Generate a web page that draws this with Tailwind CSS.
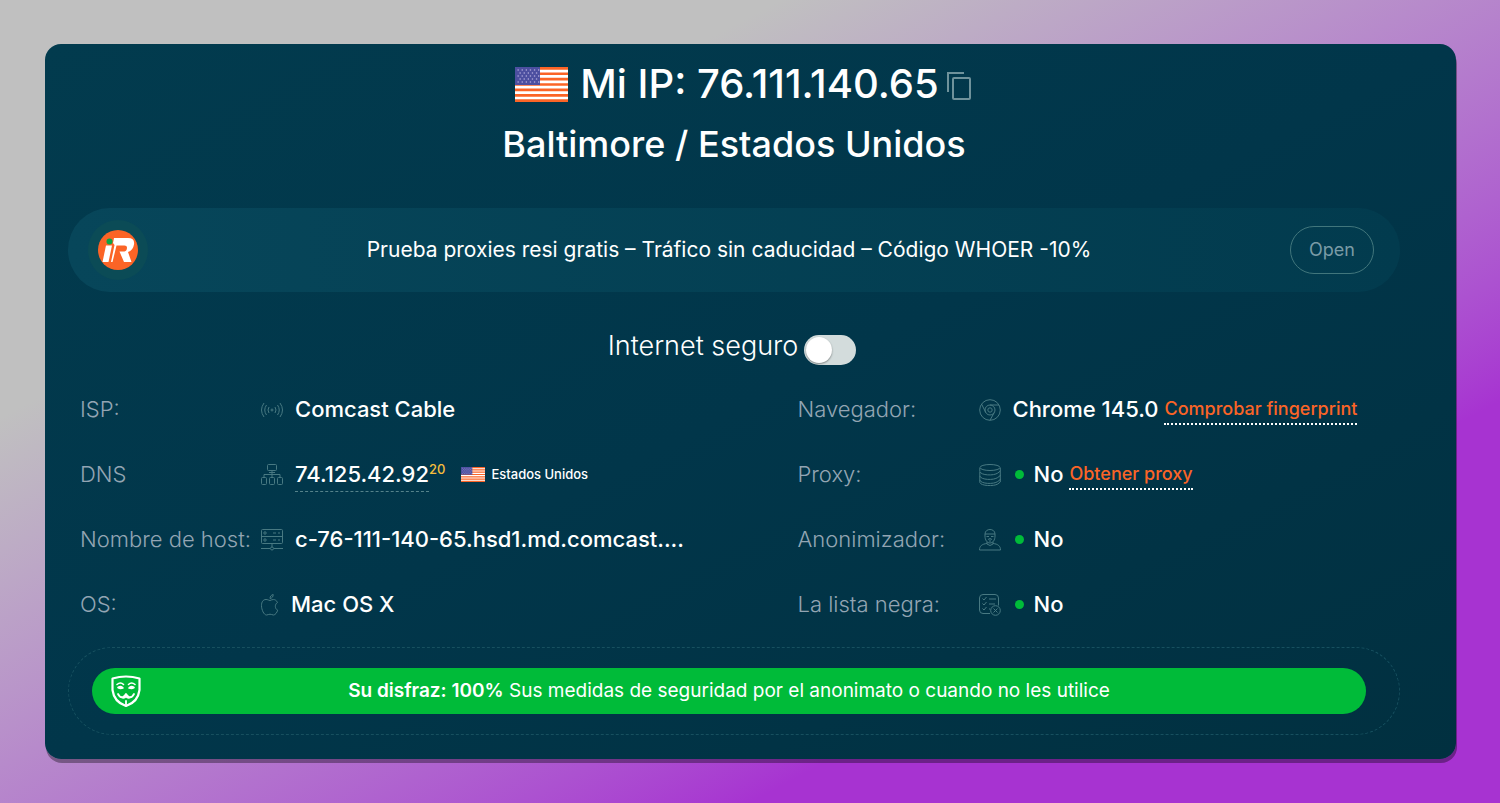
<!DOCTYPE html>
<html lang="es">
<head>
  <meta charset="UTF-8" />
  <meta name="viewport" content="width=device-width, initial-scale=1.0" />
  <title>Mi IP: 76.111.140.65</title>
  <script src="https://cdn.jsdelivr.net/npm/@tailwindcss/browser@4"></script>
</head>
<body class="min-h-screen bg-linear-to-br from-[#c0c0c0] from-26% to-[#a733d1] to-75% py-11 pr-11 pl-[45px] font-[Inter,sans-serif] text-white">
  <!-- Flag shared by the heading and the DNS row -->
  <svg class="hidden" aria-hidden="true">
    <symbol id="flag" viewBox="0 0 53 35" preserveAspectRatio="none">
      <clipPath id="flag-clip"><rect width="53" height="35" rx="3" /></clipPath>
      <g clip-path="url(#flag-clip)">
        <rect width="53" height="35" fill="#fff" />
        <path d="M0 1.35h53M0 6.75h53M0 12.1h53M0 17.5h53M0 22.9h53M0 28.3h53M0 33.65h53" stroke="#fb6426" stroke-width="2.7" />
        <rect width="25" height="18" fill="#4c4fa0" />
        <path d="M2.500 3h22M4.500 6h20M2.500 9h22M4.500 12h20M2.500 15h22" stroke="#cfc6ee" stroke-width="1.200" stroke-dasharray="1.300 2.800" />
      </g>
    </symbol>
  </svg>

  <main class="rounded-2xl bg-linear-to-br from-[#023b4e] via-[#01364a] to-[#013040] pt-3 pr-14 pb-6 pl-[23px] shadow-[1px_4px_0_rgba(0,0,0,0.35)]">
    <header class="text-center">
      <h1 class="flex h-14 items-center justify-center pl-[18px] text-[40px] font-medium">
        <svg class="mr-3 h-[35px] w-[53px]" role="img" aria-label="Estados Unidos"><use href="#flag" /></svg>
        <span>Mi IP: 76.111.140.65</span>
        <button type="button" aria-label="Copiar" class="mt-1 ml-2 text-[#6f929b]">
          <svg class="h-7 w-6" viewBox="0 0 24 28" fill="none" stroke="currentColor" stroke-width="2">
            <path d="M1 20V1h16" />
            <rect x="6" y="6" width="17" height="21" rx="1" />
          </svg>
        </button>
      </h1>
      <h2 class="mt-2 text-4xl/12 font-medium">Baltimore / Estados Unidos</h2>
    </header>

    <section class="mt-10 flex h-21 items-center rounded-full bg-linear-to-r from-[#07465a] to-[#023b4e] pr-[26px] pl-5">
      <div class="flex size-15 items-center justify-center rounded-full bg-[#0b4b56]">
        <svg class="size-10" viewBox="0 0 40 40" role="img" aria-label="iR">
          <circle cx="20" cy="20" r="20" fill="#fb6426" />
          <path d="M8 15.500h6L10.500 32H4.500z" fill="#fff" />
          <path d="M16 8h14q7 0 6 6.500-1 6-6 7.500l3.500 10H26l-4.500-10.500h5q2.500-.5 2.500-4 0-2-2.500-2h-8L14.500 32H13l3.500-17-1.500-2z" fill="#fff" />
          <circle cx="11.500" cy="11.500" r="3" fill="#0ba545" />
        </svg>
      </div>
      <p class="flex-1 pl-5 text-center text-[21px]">Prueba proxies resi gratis – Tráfico sin caducidad – Código WHOER -10%</p>
      <button type="button" class="h-12 w-21 rounded-full border border-[#41767c] text-lg text-[#7a9ba6]">Open</button>
    </section>

    <div class="mt-9 flex h-10 items-center justify-center gap-1.5 pr-1">
      <label for="secure" class="pb-1 text-[27px] font-light">Internet seguro</label>
      <input type="checkbox" id="secure" role="switch"
             class="relative mt-1 h-[30px] w-13 appearance-none rounded-full bg-[#d3dcdc] before:absolute before:top-0.5 before:left-0.5 before:size-[26px] before:rounded-full before:bg-white before:shadow-[0_1px_2px_rgba(0,0,0,0.4)] checked:bg-[#00bb39] checked:before:left-6" />
    </div>

    <div class="mt-[9px] grid grid-cols-2 gap-x-[115px] pl-3 text-[22px] font-medium">
      <dl>
        <div class="flex h-[65px] items-center">
          <dt class="w-[181px] font-light text-[#93a5b3]">ISP:</dt>
          <dd class="flex items-center">
            <svg class="mr-3 size-[22px] text-[#487982]" viewBox="0 0 22 22" fill="none" stroke="currentColor">
              <circle cx="11" cy="11" r="1" />
              <path d="M8 8q-2 3 0 6M5.500 6q-3.500 5 0 10M3 4q-5 7 0 14M14 8q2 3 0 6M16.500 6q3.500 5 0 10M19 4q5 7 0 14" />
            </svg>
            Comcast Cable
          </dd>
        </div>
        <div class="flex h-[65px] items-center">
          <dt class="w-[181px] font-light text-[#93a5b3]">DNS</dt>
          <dd class="flex items-center">
            <svg class="mr-3 size-[22px] text-[#487982]" viewBox="0 0 22 22" fill="none" stroke="currentColor">
              <rect x="6.500" y=".5" width="9" height="6" rx="1" />
              <path d="M8 8.500h6M11 6.500v4M3 13v-2.500h16V13M11 10.500V13" />
              <rect x=".5" y="13.500" width="5" height="7" rx="1" />
              <rect x="8.500" y="13.500" width="5" height="7" rx="1" />
              <rect x="16.500" y="13.500" width="5" height="7" rx="1" />
            </svg>
            <span class="border-b border-dashed border-[#56838b]">74.125.42.92</span>
            <sup class="-top-1.5 text-[13px] text-[#f5bd3c]">20</sup>
            <svg class="mr-1.5 ml-4 h-[15px] w-6" aria-hidden="true"><use href="#flag" /></svg>
            <span class="text-[13px]">Estados Unidos</span>
          </dd>
        </div>
        <div class="flex h-[65px] items-center">
          <dt class="w-[181px] shrink-0 font-light whitespace-nowrap text-[#93a5b3]">Nombre de host:</dt>
          <dd class="flex items-center whitespace-nowrap">
            <svg class="mr-3 size-[22px] shrink-0 text-[#487982]" viewBox="0 0 22 22" fill="none" stroke="currentColor">
              <rect x=".5" y=".5" width="21" height="14" rx="1" />
              <path d="M.5 7.500h21M12 4h3M17 4h2M12 11h3M17 11h2M11 14.500V18M0 19.500h9M13 19.500h9" />
              <circle cx="4" cy="4" r="1.200" /><circle cx="4" cy="11" r="1.200" /><circle cx="11" cy="19.500" r="1.500" />
            </svg>
            c-76-111-140-65.hsd1.md.comcast....
          </dd>
        </div>
        <div class="flex h-[65px] items-center">
          <dt class="w-[181px] font-light text-[#93a5b3]">OS:</dt>
          <dd class="flex items-center">
            <svg class="mr-3 h-[22px] w-[18px] text-[#487982]" viewBox="0 0 18 22" fill="none" stroke="currentColor">
              <path d="M9 6.500C7 6 6.500 5.500 5 5.500 2 5.500.5 8 .5 11.500.5 16 3 21 5.500 21c1.500 0 2-.8 3.500-.8s2 .8 3.500.8c1.800 0 3.500-2.500 4.200-4.800-3-1.400-3.200-6-.2-7.700C15.600 6.500 14 5.500 12.500 5.500c-1.500 0-2.200.6-3.500 1z" />
              <path d="M9 4.500C9 2.500 10.300.900 12.200.5c.1 2-1.200 3.800-3.200 4z" />
            </svg>
            Mac OS X
          </dd>
        </div>
      </dl>

      <dl>
        <div class="flex h-[65px] items-center">
          <dt class="w-[181px] font-light text-[#93a5b3]">Navegador:</dt>
          <dd class="flex items-center whitespace-nowrap">
            <svg class="mr-3 size-[22px] text-[#487982]" viewBox="0 0 22 22" fill="none" stroke="currentColor">
              <circle cx="11" cy="11" r="10.300" /><circle cx="11" cy="11" r="5" /><circle cx="11" cy="11" r="2.200" />
              <path d="M11 6h9M2.500 5l4.300 8.500M15.300 13.500L11 21.200" />
            </svg>
            Chrome 145.0
            <a href="#" class="ml-1.5 border-b-2 border-dotted border-white text-lg text-[#fb6426]">Comprobar fingerprint</a>
          </dd>
        </div>
        <div class="flex h-[65px] items-center">
          <dt class="w-[181px] font-light text-[#93a5b3]">Proxy:</dt>
          <dd class="flex items-center">
            <svg class="mr-3 size-[22px] text-[#487982]" viewBox="0 0 22 22" fill="none" stroke="currentColor">
              <ellipse cx="11" cy="3.500" rx="10" ry="3" />
              <path d="M.8 4v3.500c1 4 14 4.500 18 1.500l2.500-2V4M.8 8v4c1 4 14 4.500 18 1.500l2.500-2V7M.8 12v4c1 4 14 4.500 18 1.500l2.500-2V11M.8 16v2.500c1 3.500 14 4 18 1.500l2.500-2v-3" />
            </svg>
            <span class="mr-2.5 ml-0.5 size-[9px] rounded-full bg-[#00bb39]"></span>
            No
            <a href="#" class="ml-1.5 border-b-2 border-dotted border-white text-lg text-[#fb6426]">Obtener proxy</a>
          </dd>
        </div>
        <div class="flex h-[65px] items-center">
          <dt class="w-[181px] font-light text-[#93a5b3]">Anonimizador:</dt>
          <dd class="flex items-center">
            <svg class="mr-3 size-[22px] text-[#487982]" viewBox="0 0 22 22" fill="none" stroke="currentColor">
              <path d="M6 7V5c0-6 10-6 10 0v2c0 4-2 7-5 7S6 11 6 7zM6 5h10M7.500 7.500h2.500M12 7.500h2.500M9 10.500l2-1 2 1M11 10.500V13M8 13v2l3 1.500L14 15v-2" />
              <path d="M8 14.500c-5 .5-7.500 2.500-7.500 6.500h21c0-4-2.500-6-7.500-6.500" />
            </svg>
            <span class="mr-2.5 ml-0.5 size-[9px] rounded-full bg-[#00bb39]"></span>
            No
          </dd>
        </div>
        <div class="flex h-[65px] items-center">
          <dt class="w-[181px] font-light whitespace-nowrap text-[#93a5b3]">La lista negra:</dt>
          <dd class="flex items-center">
            <svg class="mr-3 size-[22px] text-[#487982]" viewBox="0 0 22 22" fill="none" stroke="currentColor">
              <path d="M11 19.500H4q-3.500 0-3.500-3.500V4Q.5.500 4 .5h12q3.500 0 3.500 3.500v7.500" />
              <path d="M3.500 4.500L5 6l2.500-3M3.500 9.500L5 11l2.500-3M3.500 14.500L5 16l2.500-3M10 5h7M10 10h6M10 15h1" />
              <circle cx="16.500" cy="16.500" r="4.800" /><path d="M14.500 14.500l4 4M18.500 14.500l-4 4" />
            </svg>
            <span class="mr-2.5 ml-0.5 size-[9px] rounded-full bg-[#00bb39]"></span>
            No
          </dd>
        </div>
      </dl>
    </div>

    <section class="mt-2.5 rounded-full border border-dashed border-[#17505f] py-5 pr-[33px] pl-[23px]">
      <div class="flex h-[46px] items-center rounded-full bg-[#00bb39] px-[19px] text-[19px]">
        <svg class="h-8 w-[30px]" viewBox="0 0 30 32" fill="none" stroke="#fff" stroke-linecap="round" stroke-linejoin="round" aria-hidden="true">
          <path d="M1.500 3.500Q15-.5 28.500 3.500V15Q27 27 15 31 3 27 1.500 15z" stroke-width="2.200" />
          <path d="M6 9.500q3.500-3 6.500 0M17.500 9.500q3-3 6.500 0M7 12.500q3-2 5 .5-3 1-5-.5M18 13q2-2.500 5-.5-2 1.500-5 .5" stroke-width="1.600" />
          <path d="M7 19q2 4 5 3 2-1 3-3 1 2 3 3 3 1 5-3M10 22q3 2 5-.5 2 2.500 5 .5M15 26v4" stroke-width="1.800" />
        </svg>
        <p class="flex-1 pr-[30px] text-center"><strong class="font-semibold">Su disfraz: 100%</strong> Sus medidas de seguridad por el anonimato o cuando no les utilice</p>
      </div>
    </section>
  </main>
</body>
</html>
